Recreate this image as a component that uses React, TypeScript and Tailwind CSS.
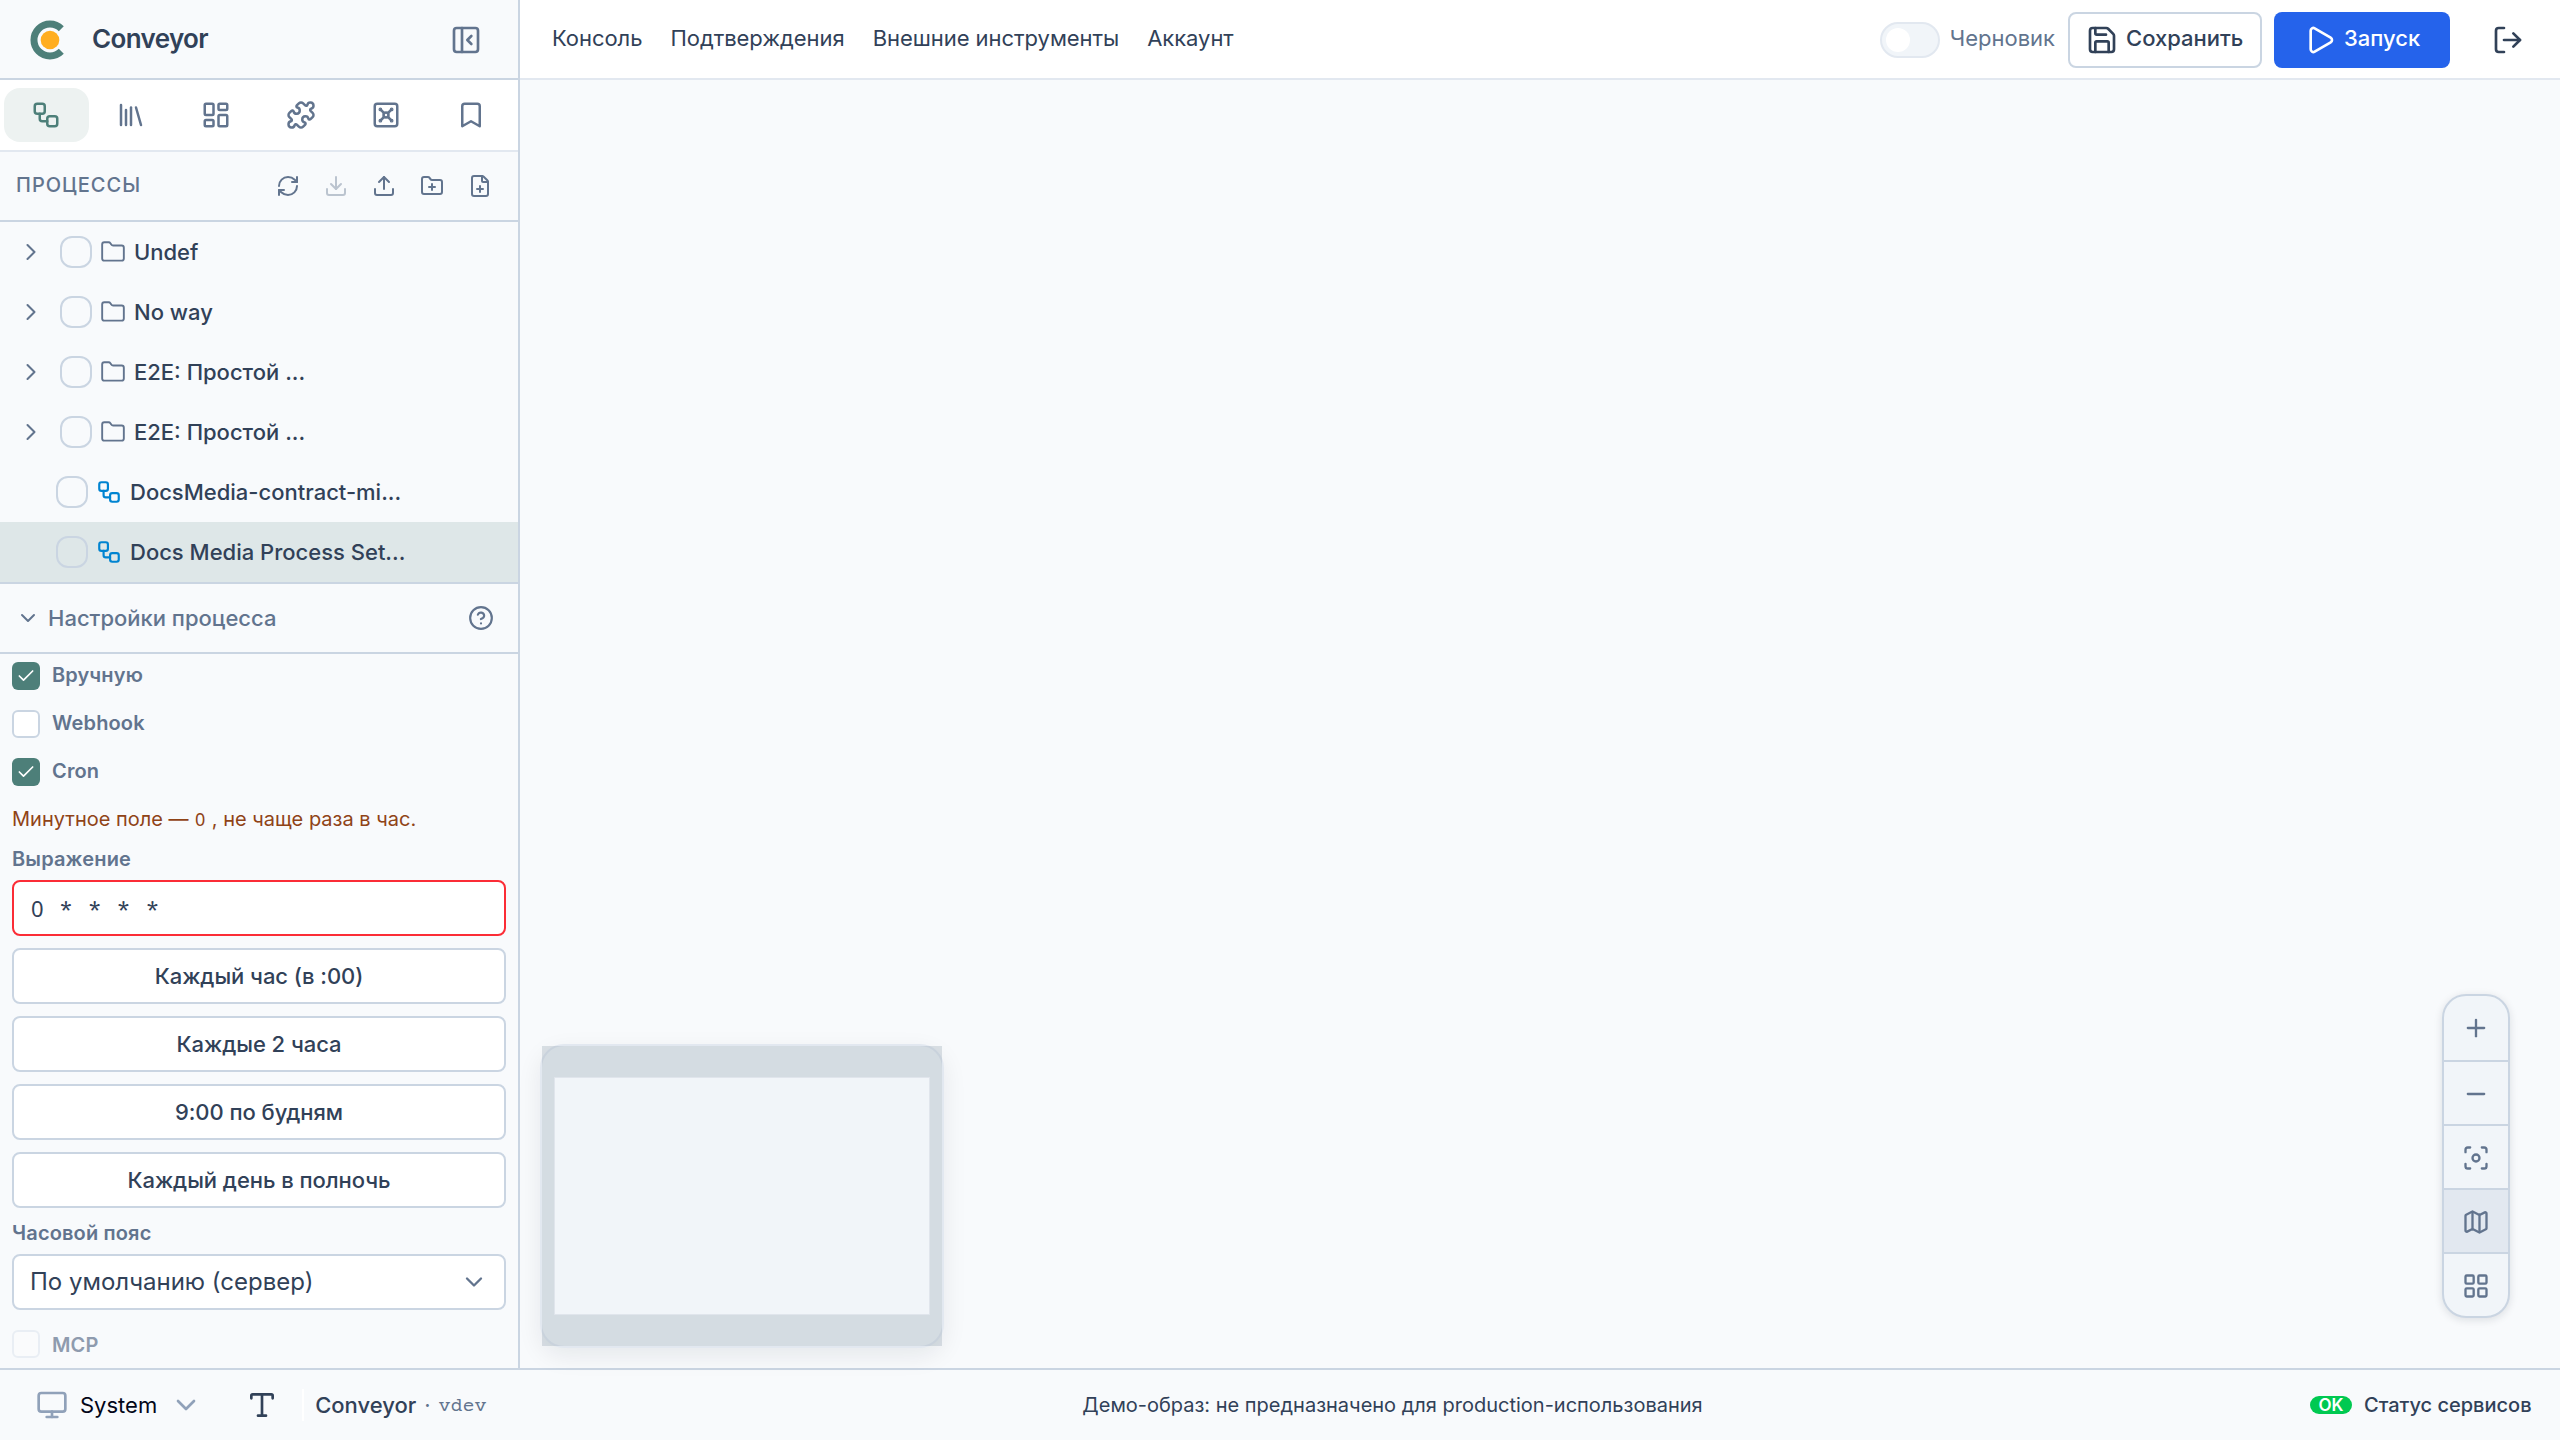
import {
  Bookmark,
  Check,
  ChevronDown,
  ChevronRight,
  CircleQuestionMark,
  Download,
  FilePlus,
  Focus,
  Folder,
  FolderPlus,
  LayoutDashboard,
  LayoutGrid,
  Library,
  LogOut,
  Map,
  Minus,
  Monitor,
  PanelLeftClose,
  Play,
  Plus,
  Puzzle,
  RefreshCw,
  Save,
  Type,
  Upload,
  Vault,
  Workflow,
} from "lucide-react";

const tabs = [Workflow, Library, LayoutDashboard, Puzzle, Vault, Bookmark];
const actions = [RefreshCw, Download, Upload, FolderPlus, FilePlus];
const folders = ["Undef", "No way", "E2E: Простой ...", "E2E: Простой ..."];
const processes = ["DocsMedia-contract-mi...", "Docs Media Process Set..."];
const presets = ["Каждый час (в :00)", "Каждые 2 часа", "9:00 по будням", "Каждый день в полночь"];
const nav = ["Консоль", "Подтверждения", "Внешние инструменты", "Аккаунт"];
const controls = [Plus, Minus, Focus, Map, LayoutGrid];

function Logo() {
  return (
    <svg width="40" height="40" viewBox="0 0 40 40" fill="none">
      <path d="M31.3 8.7a16 16 0 1 0 0 22.6" stroke="#4d7f79" strokeWidth="7" />
      <circle cx="20" cy="20" r="9.3" fill="#ffae1f" />
    </svg>
  );
}

function CheckRow({ label, checked, disabled }: { label: string; checked?: boolean; disabled?: boolean }) {
  return (
    <label className="flex h-10 items-center gap-3">
      {checked ? (
        <span className="flex size-7 items-center justify-center rounded-md bg-[#4d7f79] text-white">
          <Check size={20} strokeWidth={2} />
        </span>
      ) : (
        <span className={"size-7 rounded-md border-2 border-slate-300 bg-white " + (disabled ? "opacity-30" : "")} />
      )}
      <span
        className={
          "text-[20px] leading-[30px] font-semibold tracking-[0.15px] text-slate-500 " + (disabled ? "pt-0.5 opacity-70" : "pb-0.5")
        }
      >
        {label}
      </span>
    </label>
  );
}

function Sidebar() {
  return (
    <aside className="flex w-[520px] shrink-0 flex-col overflow-hidden border-r-2 border-slate-300 bg-slate-50">
      <div className="flex h-20 shrink-0 items-center border-b-2 border-slate-300 pt-0.5 pr-9 pl-[30px]">
        <Logo />
        <span className="mb-0.5 ml-[22px] text-[26px] leading-9 font-semibold tracking-[-0.025em] text-slate-700">Conveyor</span>
        <PanelLeftClose size={32} className="ml-auto text-slate-500" />
      </div>

      <div className="flex h-[72px] shrink-0 items-center border-b-2 border-slate-200 bg-white pr-[5px] pl-1">
        {tabs.map((Icon, i) => (
          <button
            key={i}
            className={
              "flex h-[54px] flex-1 items-center justify-center rounded-2xl " +
              (i === 0 ? "bg-[#edf2f1] text-[#4d7f79]" : "text-slate-500")
            }
          >
            <Icon size={30} />
          </button>
        ))}
      </div>

      <div className="flex h-[70px] shrink-0 items-center border-b-2 border-slate-300 pr-3.5 pl-4 text-slate-500">
        <span className="mb-0.5 text-[20px] font-medium tracking-[0.05em]">ПРОЦЕССЫ</span>
        <div className="ml-auto flex">
          {actions.map((Icon, i) => (
            <button key={i} className={"flex size-12 items-center justify-center " + (i === 1 ? "opacity-40" : "")}>
              <Icon size={24} />
            </button>
          ))}
        </div>
      </div>

      <ul className="shrink-0 text-[22px] font-medium text-slate-700">
        {folders.map((name, i) => (
          <li key={i} className="flex h-[60px] items-center pl-[17px]">
            <ChevronRight size={28} strokeWidth={1.75} className="text-slate-500" />
            <span className="ml-[15px] size-8 rounded-xl border-2 border-slate-300" />
            <Folder size={26} strokeWidth={1.75} className="ml-2 text-slate-500" />
            <span className="ml-2">{name}</span>
          </li>
        ))}
        {processes.map((name, i) => (
          <li key={i} className={"flex h-[60px] items-center pl-14 " + (i === 1 ? "bg-[#dee7e8]" : "")}>
            <span className="size-8 rounded-xl border-2 border-slate-300" />
            <Workflow size={26} className="ml-2 text-sky-600" />
            <span className="ml-2">{name}</span>
          </li>
        ))}
      </ul>

      <div className="flex h-[72px] shrink-0 items-center border-y-2 border-slate-300 pr-6 pl-4 text-slate-500">
        <ChevronDown size={24} />
        <span className="ml-2 text-[22px] font-medium">Настройки процесса</span>
        <CircleQuestionMark size={26} className="ml-auto" />
      </div>

      <div className="flex min-h-0 flex-1 flex-col overflow-hidden px-3 pt-0.5">
        <div className="flex flex-col gap-2">
          <CheckRow label="Вручную" checked />
          <CheckRow label="Webhook" />
          <CheckRow label="Cron" checked />
        </div>
        <p className="mt-3 h-[30px] shrink-0 text-[20px] leading-[30px] text-[#8f4317]">
          Минутное поле — <code className="inline-block w-3 text-center font-['Noto_Sans',monospace] text-[18px] leading-none">0</code> , не чаще раза в
          час.
        </p>
        <span className="mt-2.5 mb-1.5 text-[20px] leading-[30px] font-semibold tracking-[0.15px] text-slate-500">Выражение</span>
        <div className="flex h-14 shrink-0 items-center rounded-lg border-2 border-red-500 bg-white px-4 text-slate-700">
          <span className="w-[14.4px] text-center font-['Noto_Sans',monospace] text-[22px]">0</span>
          <span className="pt-1 font-['Courier_Prime','Liberation_Mono',monospace] text-[24px] whitespace-pre"> * * * *</span>
        </div>
        <div className="mt-3 flex flex-col gap-3">
          {presets.map((name) => (
            <button
              key={name}
              className="h-14 rounded-lg border-2 border-slate-300 bg-white text-[22px] font-medium tracking-[-0.05px] text-slate-700"
            >
              {name}
            </button>
          ))}
        </div>
        <span className="mt-2.5 mb-1.5 text-[20px] leading-[30px] font-semibold tracking-[0.15px] text-slate-500">Часовой пояс</span>
        <div className="mb-3.5 flex h-14 shrink-0 items-center justify-between rounded-lg border-2 border-slate-300 bg-white px-4 text-[24px] text-slate-700">
          По умолчанию (сервер)
          <ChevronDown size={28} className="text-slate-500" />
        </div>
        <CheckRow label="MCP" disabled />
      </div>
    </aside>
  );
}

function Header() {
  return (
    <header className="flex h-20 shrink-0 items-center border-b-2 border-slate-200 bg-white pt-0.5 pr-6 pl-8 text-[22px] text-slate-700">
      <nav className="mb-1 flex gap-7 tracking-[-0.05px]">
        {nav.map((name) => (
          <a key={name}>{name}</a>
        ))}
      </nav>
      <div className="ml-auto flex items-center">
        <span className="flex h-9 w-[60px] items-center rounded-full border-2 border-slate-200 bg-slate-100 pl-1">
          <span className="size-6 rounded-full bg-white" />
        </span>
        <span className="mb-1 ml-2.5 text-slate-500">Черновик</span>
        <button className="ml-[13px] flex h-14 w-[194px] items-center gap-2 rounded-lg border-2 border-slate-300 px-4 font-medium">
          <Save size={32} />
          <span className="mb-1">Сохранить</span>
        </button>
        <button className="ml-3 flex h-14 w-44 items-center justify-center gap-2 rounded-lg bg-[#2563eb] font-medium text-white">
          <Play size={32} />
          <span className="mb-1">Запуск</span>
        </button>
        <button className="ml-[30px] flex size-14 items-center justify-center">
          <LogOut size={32} />
        </button>
      </div>
    </header>
  );
}

function MiniMap() {
  return (
    <div className="absolute bottom-5 left-5 h-[304px] w-[404px] rounded-3xl border-2 border-slate-200 bg-slate-100 shadow-[0_8px_24px_rgba(15,23,42,0.08)]">
      <svg width="400" height="300" viewBox="0 0 400 300">
        <path
          d="M0 0h400v300H0zM12.5 31.5h375v237h-375z"
          fill="#8a9ba9"
          fillOpacity="0.28"
          fillRule="evenodd"
        />
        <path d="M12.5 31.5h375v237h-375z" fill="none" stroke="#e0e5ec" />
      </svg>
    </div>
  );
}

function ZoomControls() {
  return (
    <div className="absolute right-[50px] bottom-[50px] flex w-[68px] flex-col overflow-hidden rounded-3xl border-2 border-slate-300 bg-slate-100 text-slate-500 shadow-[0_2px_8px_rgba(15,23,42,0.12)]">
      {controls.map((Icon, i) => (
        <button
          key={i}
          className={
            "flex h-16 items-center justify-center " +
            (i > 0 ? "border-t-2 border-slate-300 pt-0.5 " : "") +
            (i === 3 ? "bg-slate-200" : "")
          }
        >
          <Icon size={28} />
        </button>
      ))}
    </div>
  );
}

function Footer() {
  return (
    <footer className="flex h-[72px] shrink-0 items-center border-t-2 border-slate-300 bg-slate-50 text-[22px] text-slate-700">
      <div className="flex w-[500px] items-center pl-9">
        <Monitor size={32} className="text-slate-400" />
        <span className="ml-3 text-slate-950">System</span>
        <ChevronDown size={32} className="ml-[13px] text-slate-400" />
        <Type size={32} className="ml-11" />
        <span className="ml-6 h-8 w-0.5 bg-white" />
        <span className="ml-[11px] font-medium">Conveyor</span>
        <span className="ml-2 text-slate-500">·</span>
        <span className="ml-2 pt-1 font-['Courier_Prime','Liberation_Mono',monospace] text-[20px] text-slate-500">vdev</span>
      </div>
      <span className="flex-1 text-center text-[20px]">Демо-образ: не предназначено для production-использования</span>
      <div className="flex w-[275px] items-center pl-[25px] text-[20px] font-medium">
        <span className="flex h-[18px] w-[42px] items-center justify-center rounded-full bg-green-500 text-[17px] leading-[18px] font-semibold text-white">
          OK
        </span>
        <span className="ml-3">Статус сервисов</span>
      </div>
    </footer>
  );
}

export default function App() {
  return (
    <div className="flex h-[1440px] w-[2560px] flex-col overflow-hidden bg-slate-50 font-['Inter',sans-serif]">
      <div className="flex min-h-0 flex-1">
        <Sidebar />
        <div className="flex flex-1 flex-col">
          <Header />
          <main className="relative flex-1">
            <MiniMap />
            <ZoomControls />
          </main>
        </div>
      </div>
      <Footer />
    </div>
  );
}
